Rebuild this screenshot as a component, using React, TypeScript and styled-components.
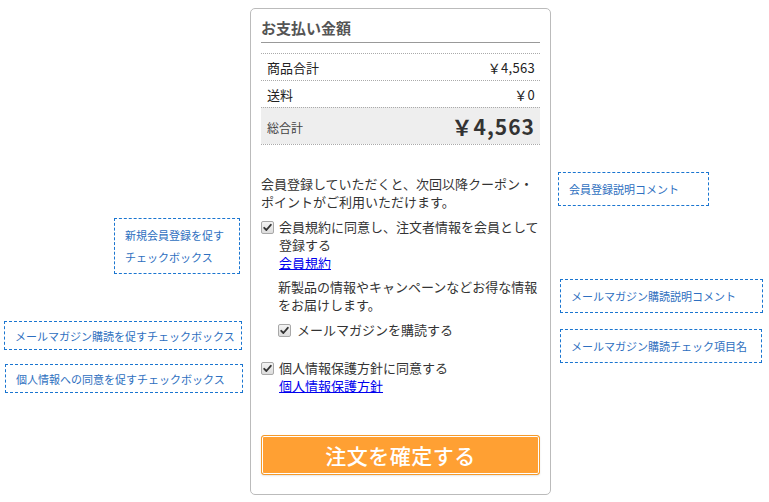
import styled, { createGlobalStyle } from "styled-components";

const GlobalStyle = createGlobalStyle`
  html, body {
    margin: 0;
    padding: 0;
    background: #fff;
  }
  body {
    font-family: "Noto Sans CJK JP", "Noto Sans", sans-serif;
    color: #333;
  }
`;

const Canvas = styled.div`
  position: relative;
  width: 769px;
  height: 502px;
  padding-top: 8px;
  box-sizing: border-box;
`;

const Card = styled.div`
  margin-left: 250px;
  width: 301px;
  box-sizing: border-box;
  border: 1px solid #bbb;
  border-radius: 5px;
  padding: 8px 10px 19px;
  background: #fff;
`;

const Title = styled.h2`
  margin: 0 0 10px;
  font-size: 15px;
  font-weight: 700;
  line-height: 22px;
  color: #555;
  padding-bottom: 3px;
  border-bottom: 1px solid #999;
`;

const Table = styled.div`
  border-bottom: 1px dotted #aaa;
`;

const Row = styled.div<{ $total?: boolean }>`
  display: flex;
  justify-content: space-between;
  align-items: center;
  height: ${(p) => (p.$total ? 36 : 26)}px;
  padding: 0 5px 0 6px;
  border-top: 1px dotted #aaa;
  background: ${(p) => (p.$total ? "#eee" : "transparent")};
  font-size: 13px;
  color: #222;
`;

const Label = styled.span<{ $small?: boolean }>`
  font-size: ${(p) => (p.$small ? 12 : 13)}px;
  color: ${(p) => (p.$small ? "#444" : "#222")};
  padding-top: ${(p) => (p.$small ? 3 : 0)}px;
`;

const Price = styled.span<{ $big?: boolean }>`
  font-size: ${(p) => (p.$big ? 21 : 13)}px;
  font-weight: ${(p) => (p.$big ? 700 : 400)};
  color: ${(p) => (p.$big ? "#333" : "#222")};
  letter-spacing: ${(p) => (p.$big ? "1px" : "0.3px")};
`;

const Text = styled.p<{ $mt: number; $indent?: boolean }>`
  margin: ${(p) => p.$mt}px 0 0 ${(p) => (p.$indent ? 17 : 0)}px;
  font-size: 13px;
  line-height: 18px;
  color: #333;
`;

const CheckRow = styled.div<{ $mt: number; $indent?: boolean }>`
  display: flex;
  align-items: flex-start;
  gap: ${(p) => (p.$indent ? 6 : 5)}px;
  margin: ${(p) => p.$mt}px 0 0 ${(p) => (p.$indent ? 17 : 0)}px;
  font-size: 13px;
  line-height: 18px;
  color: #333;
`;

const Box = styled.span`
  flex: none;
  display: flex;
  align-items: center;
  justify-content: center;
  width: 11px;
  height: 11px;
  margin-top: 3px;
  border: 1px solid #a8a8a8;
  border-radius: 2px;
  background: linear-gradient(#f4f4f4, #dcdcdc);
`;

const LinkText = styled.a`
  display: block;
  color: #0000ee;
  text-decoration: underline;
  cursor: pointer;
`;

const SubmitButton = styled.button`
  display: block;
  width: 100%;
  height: 40px;
  margin-top: 40px;
  border: 1px solid #f59a2a;
  border-radius: 3px;
  box-shadow: inset 0 0 0 1px #fff, 0 1px 2px rgba(0, 0, 0, 0.1);
  background: #ffa033;
  color: #fff;
  font-family: "Noto Sans CJK JP", sans-serif;
  font-size: 21px;
  font-weight: 500;
  letter-spacing: 0.5px;
  cursor: pointer;
`;

const Note = styled.div<{ $x: number; $y: number; $w: number; $h: number }>`
  position: absolute;
  left: ${(p) => p.$x}px;
  top: ${(p) => p.$y}px;
  width: ${(p) => p.$w}px;
  height: ${(p) => p.$h}px;
  box-sizing: border-box;
  border: 1px dashed #1a75d0;
  padding: 0 0 0 10px;
  display: flex;
  flex-direction: column;
  justify-content: center;
  font-size: 11px;
  line-height: 22px;
  color: #2e6fc0;
  white-space: nowrap;
`;

const Check = () => (
  <Box>
    <svg width="9" height="9" viewBox="0 0 9 9">
      <path
        d="M1.2 4.8 L3.4 7 L7.8 1.8"
        fill="none"
        stroke="#333"
        strokeWidth="1.8"
        strokeLinecap="round"
        strokeLinejoin="round"
      />
    </svg>
  </Box>
);

const notes = [
  { x: 114, y: 218, w: 126, h: 56, lines: ["新規会員登録を促す", "チェックボックス"] },
  { x: 4, y: 321, w: 238, h: 29, lines: ["メールマガジン購読を促すチェックボックス"] },
  { x: 5, y: 364, w: 238, h: 29, lines: ["個人情報への同意を促すチェックボックス"] },
  { x: 558, y: 172, w: 151, h: 34, lines: ["会員登録説明コメント"] },
  { x: 560, y: 279, w: 203, h: 34, lines: ["メールマガジン購読説明コメント"] },
  { x: 560, y: 329, w: 202, h: 34, lines: ["メールマガジン購読チェック項目名"] },
];

const App = () => {
  return (
    <>
      <GlobalStyle />
      <Canvas>
        <Card>
          <Title>お支払い金額</Title>
          <Table>
            <Row>
              <Label>商品合計</Label>
              <Price>￥4,563</Price>
            </Row>
            <Row>
              <Label>送料</Label>
              <Price>￥0</Price>
            </Row>
            <Row $total>
              <Label $small>総合計</Label>
              <Price $big>￥4,563</Price>
            </Row>
          </Table>

          <Text $mt={30}>
            会員登録していただくと、次回以降クーポン・
            <br />
            ポイントがご利用いただけます。
          </Text>

          <CheckRow $mt={7}>
            <Check />
            <div>
              会員規約に同意し、注文者情報を会員として登録する
              <LinkText>会員規約</LinkText>
            </div>
          </CheckRow>

          <Text $mt={6} $indent>
            新製品の情報やキャンペーンなどお得な情報をお届けします。
          </Text>

          <CheckRow $mt={7} $indent>
            <Check />
            <span>メールマガジンを購読する</span>
          </CheckRow>

          <CheckRow $mt={20}>
            <Check />
            <div>
              個人情報保護方針に同意する
              <LinkText>個人情報保護方針</LinkText>
            </div>
          </CheckRow>

          <SubmitButton>注文を確定する</SubmitButton>
        </Card>

        {notes.map((n, i) => (
          <Note key={i} $x={n.x} $y={n.y} $w={n.w} $h={n.h}>
            {n.lines.map((l) => (
              <span key={l}>{l}</span>
            ))}
          </Note>
        ))}
      </Canvas>
    </>
  );
};

export default App;
